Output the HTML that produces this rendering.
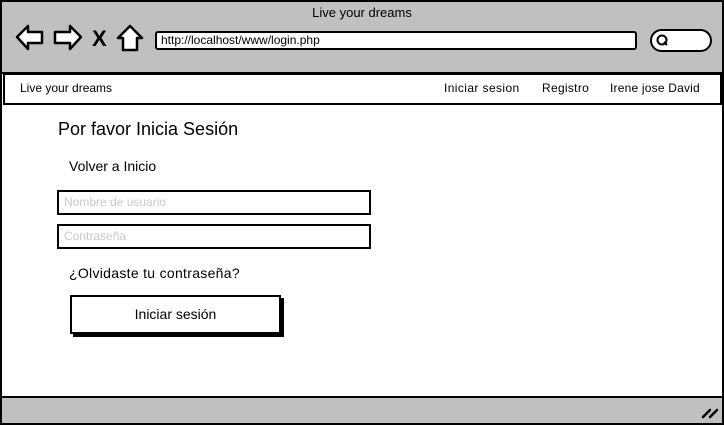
<!DOCTYPE html>
<html><head><meta charset="utf-8"><style>
*{margin:0;padding:0;box-sizing:border-box}
body{width:724px;height:425px;position:relative;background:#fff;font-family:"Comic Sans MS","Liberation Sans",sans-serif;overflow:hidden;color:#000}
.a{position:absolute}
</style></head><body>
<div class="a" style="left:0;top:0;width:724px;height:425px;border:2px solid #000"></div>
<div class="a" style="left:2px;top:2px;width:720px;height:70px;background:#c0c0c0"></div>
<div class="a" style="left:0;top:5px;width:724px;text-align:center;font-size:13px">Live your dreams</div>
<svg class="a" style="left:14px;top:22px" width="135" height="34" viewBox="0 0 135 34">
<g fill="#fff" stroke="#000" stroke-width="2.5" stroke-linejoin="round">
<path d="M3 15 L14 4 L14 10 L28 10 L28 21 L14 21 L14 27 Z"/>
<path d="M67 15 L56 4 L56 10 L41 10 L41 21 L56 21 L56 27 Z"/>
<path d="M104 16 L116 4 L128 16 L123 16 L123 28 L109 28 L109 16 Z"/>
</g>
<text x="78" y="24" font-size="22" font-weight="bold" font-family="Liberation Sans">X</text>
</svg>
<div class="a" style="left:155px;top:31px;width:482px;height:19px;background:#fff;border:2px solid #000;border-radius:3px;font-size:12px;padding-left:4px;line-height:15px">http://localhost/www/login.php</div>
<div class="a" style="left:650px;top:29px;width:62px;height:23px;background:#fff;border:2px solid #000;border-radius:12px"></div>
<svg class="a" style="left:655px;top:33px" width="16" height="16"><circle cx="7" cy="7" r="4.5" fill="none" stroke="#000" stroke-width="2"/><path d="M9 9 L12 12" stroke="#000" stroke-width="2"/></svg>
<div class="a" style="left:0;top:72px;width:724px;height:2px;background:#000"></div>
<div class="a" style="left:3px;top:73px;width:719px;height:32px;border:2px solid #000;background:#fff"></div>
<div class="a" style="left:20px;top:81px;font-size:12px">Live your dreams</div>
<div class="a" style="left:444px;top:81px;font-size:12px;letter-spacing:0.4px">Iniciar sesion</div>
<div class="a" style="left:542px;top:81px;font-size:12px;letter-spacing:0.3px">Registro</div>
<div class="a" style="left:610px;top:81px;font-size:12px;letter-spacing:0.2px">Irene jose David</div>
<div class="a" style="left:58px;top:119px;font-size:18px">Por favor Inicia Sesión</div>
<div class="a" style="left:69px;top:158px;font-size:14px">Volver a Inicio</div>
<div class="a" style="left:57px;top:190px;width:314px;height:25px;border:2px solid #000;font-size:12px;color:#c8c8c8;padding-left:5px;line-height:21px">Nombre de usuario</div>
<div class="a" style="left:57px;top:224px;width:314px;height:25px;border:2px solid #000;font-size:12px;color:#c8c8c8;padding-left:5px;line-height:21px">Contraseña</div>
<div class="a" style="left:69px;top:265px;font-size:14px;letter-spacing:0.3px">¿Olvidaste tu contraseña?</div>
<div class="a" style="left:70px;top:295px;width:211px;height:39px;border:2px solid #000;box-shadow:3px 3px 0 #000;font-size:14px;text-align:center;line-height:35px">Iniciar sesión</div>
<div class="a" style="left:2px;top:396px;width:720px;height:27px;background:#c0c0c0;border-top:2px solid #000"></div>
<svg class="a" style="left:700px;top:404px" width="20" height="16"><path d="M3 13 L10 6 M10 13 L17 6" stroke="#000" stroke-width="2.5" stroke-linecap="round"/></svg>
</body></html>
